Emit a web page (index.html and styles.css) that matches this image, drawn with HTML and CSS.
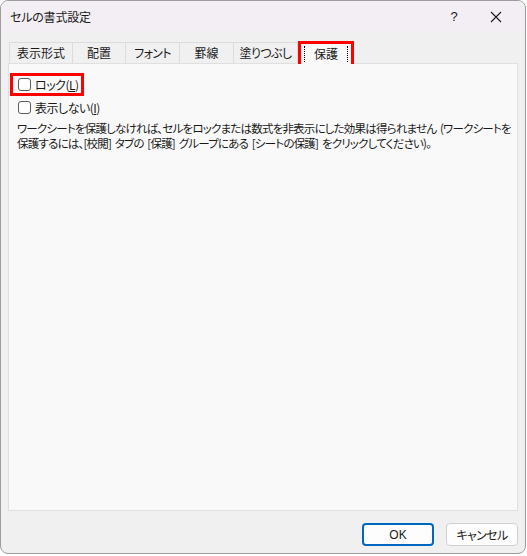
FILE: index.html
```html
<!DOCTYPE html>
<html lang="ja">
<head>
<meta charset="utf-8">
<link rel="stylesheet" href="styles.css">
</head>
<body>
<div class="dialog">
  <div class="titlebar">
    <span class="title">セルの書式設定</span>
    <span class="help">?</span>
    <span class="close"><svg width="12" height="12" viewBox="0 0 12 12"><path d="M1 1 L11 11 M11 1 L1 11" stroke="#1a1a1a" stroke-width="1.1" fill="none"/></svg></span>
  </div>
  <div class="content">
    <div class="tabs">
      <div class="tab w1">表示形式</div>
      <div class="tab w2">配置</div>
      <div class="tab w3 kana">フォント</div>
      <div class="tab w4">罫線</div>
      <div class="tab w5 kana">塗りつぶし</div>
      <div class="tab active"><span class="focus">保護</span></div>
    </div>
    <div class="panel">
      <div class="check hl"><span class="box"></span><span class="lbl">ロック(<u>L</u>)</span></div>
      <div class="check"><span class="box"></span><span class="lbl">表示しない(<u>I</u>)</span></div>
      <p class="note">ワークシートを保護しなければ、セルをロックまたは数式を非表示にした効果は得られません (ワークシートを<br>保護するには、[校閲] タブの [保護] グループにある [シートの保護] をクリックしてください)。</p>
    </div>
    <div class="footer">
      <button class="btn primary">OK</button>
      <button class="btn kana">キャンセル</button>
    </div>
  </div>
</div>
</body>
</html>
```
FILE: styles.css
```css
* { box-sizing: border-box; }
html, body { margin: 0; padding: 0; }
body {
  background: #ffffff;
  font-family: "Noto Sans CJK JP", "Noto Sans", sans-serif;
  font-size: 12px;
  color: #1a1a1a;
  font-feature-settings: "palt";
}
.kana { letter-spacing: -0.6px; }
.dialog {
  width: 526px;
  height: 554px;
  border: 1px solid #9c9c9c;
  border-radius: 8px;
  background: #f0f0f0;
  display: flex;
  flex-direction: column;
  overflow: hidden;
}
.titlebar {
  height: 31px;
  flex: none;
  background: #f3eef3;
  display: flex;
  align-items: center;
  padding-left: 9px;
}
.title { font-size: 12px; line-height: 14px; letter-spacing: -0.2px; }
.help {
  margin-left: auto;
  font-family: "Liberation Sans", sans-serif;
  font-size: 13px;
  width: 16px;
  text-align: center;
}
.close {
  width: 12px;
  height: 12px;
  margin-left: 28px;
  margin-right: 23px;
  display: flex;
}
.content {
  flex: 1;
  display: flex;
  flex-direction: column;
  padding: 9px 7px 0 7px;
}
.tabs {
  display: flex;
  align-items: flex-end;
  height: 22px;
  padding-left: 1px;
}
.tab {
  height: 21px;
  border: 1px solid #dcdcdc;
  border-bottom: none;
  border-left: none;
  background: #f0f0f0;
  display: flex;
  align-items: center;
  justify-content: center;
  font-size: 12px;
  line-height: 14px;
  white-space: nowrap;
}
.tab.w1 { width: 64px; border-left: 1px solid #dcdcdc; }
.tab.w2 { width: 53px; }
.tab.w3 { width: 54px; }
.tab.w4 { width: 54px; }
.tab.w5 { width: 64px; }
.tab.active {
  width: 56px;
  height: 23px;
  background: #f9f9f9;
  border: 3px solid #ff0000;
  border-bottom: none;
  position: relative;
  top: 1px;
}
.focus {
  display: flex;
  align-items: center;
  justify-content: center;
  width: 44px;
  height: 16px;
  border-left: 1px dotted #000;
  border-right: 1px dotted #000;
}
.panel {
  height: 448px;
  width: 510px;
  flex: none;
  background: #f9f9f9;
  border: 1px solid #e0e0e0;
  padding: 9px 0 0 1px;
}
.check {
  display: flex;
  align-items: center;
  height: 17px;
  padding-left: 8px;
  gap: 4px;
  line-height: 14px;
  white-space: nowrap;
}
.lbl { letter-spacing: -0.5px; }
.check.hl {
  width: 74px;
  border: 3px solid #ff0000;
  padding-left: 5px;
  height: 23px;
  margin-bottom: 3px;
}
.box {
  width: 13px;
  height: 13px;
  border: 1px solid #5c5c5c;
  border-radius: 3px;
  background: #fdfdfd;
  flex: none;
}
u { text-decoration: underline; text-underline-offset: 1px; }
.note {
  margin: 5px 0 0 7px;
  line-height: 15px;
  white-space: nowrap;
  font-size: 11.5px;
  letter-spacing: -0.8px;
  word-spacing: 2px;
}
.footer {
  display: flex;
  justify-content: flex-end;
  gap: 12px;
  padding-top: 12px;
}
.btn {
  width: 72px;
  height: 23px;
  font-family: "Noto Sans CJK JP", "Noto Sans", sans-serif;
  font-feature-settings: "palt";
  font-size: 12px;
  color: #1a1a1a;
  background: #fdfdfd;
  border: 1px solid #d0d0d0;
  border-radius: 4px;
  padding: 0;
  line-height: 14px;
}
.btn.primary {
  border: 2px solid #0067c0;
  font-family: "Liberation Sans", sans-serif;
}
```
